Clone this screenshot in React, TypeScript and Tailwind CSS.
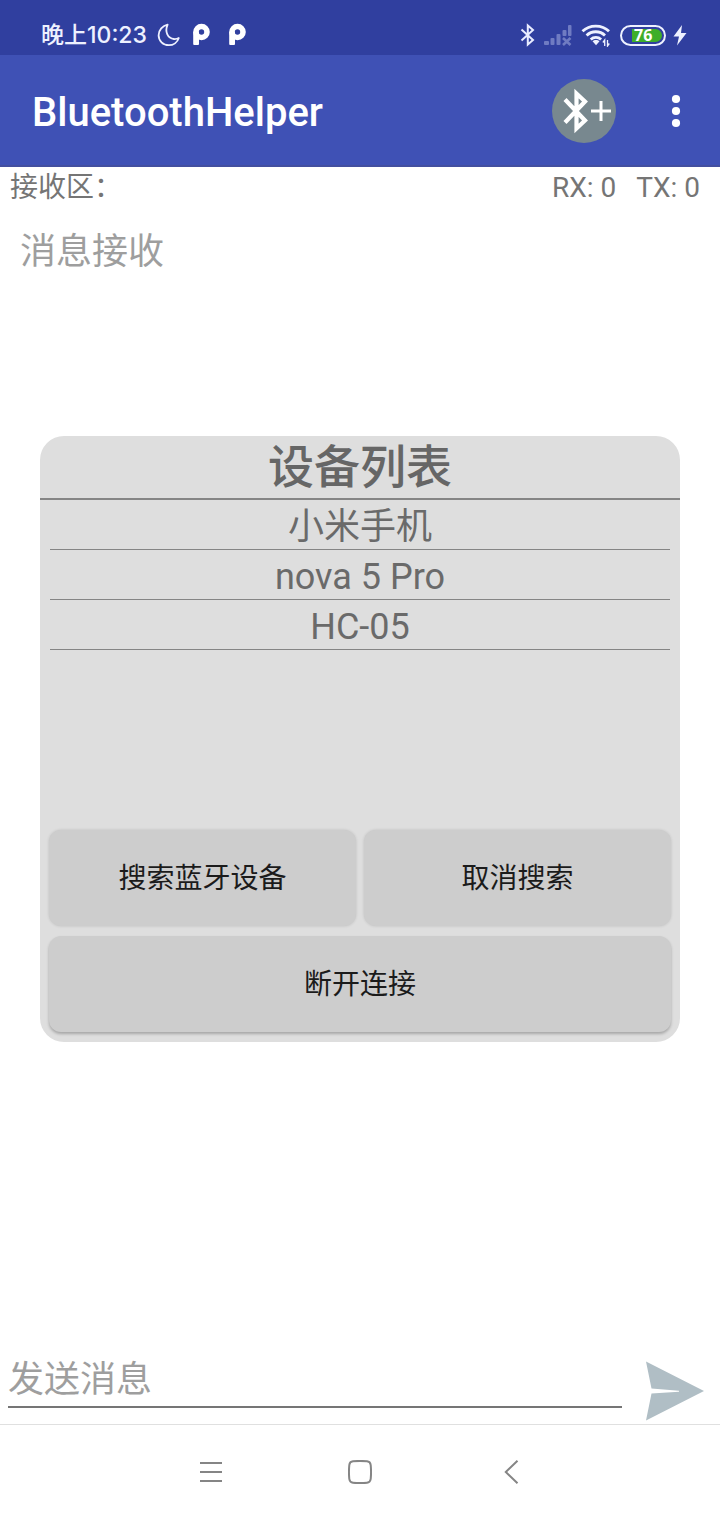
import React from "react";

const devices = ["小米手机", "nova 5 Pro", "HC-05"];

function MoonIcon() {
  return (
    <svg className="size-6" viewBox="0 0 24 24" fill="none" stroke="#eef1ff" strokeWidth="1.8" strokeLinejoin="round" aria-hidden="true">
      <path d="M10.600 1.600C5.600 2.600 1.600 7 1.600 12.200c0 5.600 4.500 10 10.200 10 4.600 0 8.600-3 10-7.200-1.700.900-3.300 1.200-5 1C11 15.500 7.400 9.200 10.600 1.600z" />
    </svg>
  );
}

function NotificationLogo() {
  return (
    <svg className="h-6 w-5" viewBox="0 0 20 24" aria-hidden="true">
      <circle cx="10.500" cy="9" r="5.500" fill="none" stroke="#ffffff" strokeWidth="5.600" />
      <rect x="2.200" y="8.500" width="5.800" height="13.500" rx="1" fill="#ffffff" />
    </svg>
  );
}

function BluetoothIcon() {
  return (
    <svg className="h-6 w-4" viewBox="0 0 16 24" fill="none" stroke="#e8ecff" strokeWidth="2" strokeLinejoin="miter" aria-hidden="true">
      <path d="M1.500 6.500L13 17 7.800 21.500V2.500L13 7 1.500 17.500" />
    </svg>
  );
}

function SignalIcon() {
  return (
    <svg className="h-6 w-7" viewBox="0 0 28 24" aria-hidden="true">
      <g fill="#6f7bc2">
        <rect x="0" y="18" width="5" height="4" rx="1" />
        <rect x="6.500" y="15" width="4" height="7" rx="1" />
        <rect x="12.500" y="11" width="4" height="11" rx="1" />
        <rect x="18.500" y="7" width="4" height="6" rx="1" />
        <rect x="24" y="2" width="3.500" height="11" rx="1" />
      </g>
      <path d="M19 15l7.500 7M26.500 15l-7.500 7" stroke="#6f7bc2" strokeWidth="2.600" />
    </svg>
  );
}

function WifiIcon() {
  return (
    <svg className="h-6 w-8" viewBox="0 0 32 24" fill="none" stroke="#eef1ff" aria-hidden="true">
      <path d="M2.500 8.300C9.500 1.300 22 1.300 29 8.300" strokeWidth="2.800" />
      <path d="M6.600 12.500c5-5 13.400-5 18.400 0" strokeWidth="2.800" />
      <path d="M10.700 16.400c3-2.800 7.400-2.800 10.400 0" strokeWidth="2.800" />
      <path d="M12.500 18.300c1.800-1.800 5.200-1.800 7 0L16 22.300z" fill="#eef1ff" stroke="none" />
      <path d="M24.700 23v-6l-1.800 2.500M27.500 17v6l1.800-2.500" strokeWidth="1.300" />
    </svg>
  );
}

function StatusBar() {
  return (
    <div className="flex h-[55px] items-end justify-between bg-[#303f9f] pr-8 pb-2 pl-[41px]">
      <div className="flex items-center">
        <span className="font-[Inter,'Noto_Sans_CJK_SC',sans-serif] text-[23px] leading-6 font-medium text-[#eef1ff]">晚上10:23</span>
        <span className="ml-2.5"><MoonIcon /></span>
        <span className="ml-2.5"><NotificationLogo /></span>
        <span className="ml-4"><NotificationLogo /></span>
      </div>
      <div className="flex items-center">
        <BluetoothIcon />
        <span className="ml-2"><SignalIcon /></span>
        <span className="ml-2"><WifiIcon /></span>
        <div className="ml-2 flex h-[21px] w-[46px] items-center rounded-full border-2 border-[#eef1ff] p-0.5">
          <div className="ml-2 flex h-[13px] flex-1 items-center justify-start rounded-r-full bg-[#3fae29] pl-0.5 font-['Open_Sans',sans-serif] text-[16px] leading-4 font-bold text-white">
            76
          </div>
        </div>
        <svg className="ml-1.5 h-6 w-4" viewBox="0 0 16 24" fill="#eef1ff" aria-hidden="true">
          <path d="M10 2L1.500 13.500h5.500L5 22.500 14.500 10H9z" />
        </svg>
      </div>
    </div>
  );
}

function AppBar() {
  return (
    <header className="flex h-28 items-center justify-between border-b-2 border-[#434f9f] bg-[#3f51b5] pt-0.5 pr-5 pl-8">
      <h1 className="pt-1 text-[40px] leading-12 font-medium text-white">BluetoothHelper</h1>
      <div className="flex items-center gap-9">
        <button type="button" aria-label="添加蓝牙设备" className="size-16 rounded-full">
          <svg className="size-16" viewBox="0 0 64 64" fill="none" stroke="#ffffff" aria-hidden="true">
            <circle cx="32" cy="32" r="32" fill="#78888f" stroke="none" />
            <path d="M13 20.500L33 41.500 24.500 49.500V14.500L33 22.500 13 43.500" strokeWidth="4.200" />
            <path d="M39 32h20M49 22v20" strokeWidth="3" />
          </svg>
        </button>
        <button type="button" aria-label="更多选项" className="flex h-16 w-12 items-center justify-center">
          <svg className="h-9 w-3" viewBox="0 0 12 36" fill="#ffffff" aria-hidden="true">
            <circle cx="6" cy="6" r="4.100" />
            <circle cx="6" cy="18" r="4.100" />
            <circle cx="6" cy="30" r="4.100" />
          </svg>
        </button>
      </div>
    </header>
  );
}

function DeviceDialog() {
  const button =
    "h-24 rounded-xl bg-[#cdcdcd] pt-0.5 text-[28px] leading-10 text-[#1b1b1b]";
  return (
    <div className="pointer-events-none absolute inset-0 flex items-center justify-center px-10 pb-px">
      <section role="dialog" aria-labelledby="devices" className="pointer-events-auto w-full rounded-3xl bg-[#dedede] pb-2.5">
        <h2 id="devices" className="border-b-2 border-[#858585] text-center text-[46px] leading-[62px] font-medium text-[#666666]">
          设备列表
        </h2>
        <ul className="min-h-80 px-2.5">
          {devices.map((name) => (
            <li key={name} className="border-b border-[#858585]">
              <button type="button" className="block h-[49px] w-full pt-1 text-center text-[36px] leading-[46px] text-[#6a6a6a]">
                {name}
              </button>
            </li>
          ))}
        </ul>
        <div className="grid grid-cols-2 gap-x-2 gap-y-2.5 px-[9px] pt-2.5">
          <button type="button" className={`${button} shadow-[0_0_3px_#00000026]`}>搜索蓝牙设备</button>
          <button type="button" className={`${button} shadow-[0_0_3px_#00000026]`}>取消搜索</button>
          <button type="button" className={`${button} col-span-2 shadow-[0_2px_3px_#00000040]`}>断开连接</button>
        </div>
      </section>
    </div>
  );
}

export default function App() {
  return (
    <div className="flex min-h-screen flex-col bg-white font-[Roboto,'Noto_Sans_CJK_SC',sans-serif]">
      <StatusBar />
      <div className="relative flex flex-1 flex-col">
        <AppBar />
        <main className="flex flex-1 flex-col">
          <div className="flex h-[42px] items-center justify-between pr-5 pl-2.5 text-[28px] leading-10 text-[#757575]">
            <label htmlFor="received">接收区：</label>
            <div className="flex gap-5">
              <span>RX: 0</span>
              <span>TX: 0</span>
            </div>
          </div>
          <textarea
            id="received"
            readOnly
            placeholder="消息接收"
            className="w-full flex-1 resize-none px-5 pt-4 text-[36px] leading-[54px] text-[#757575] outline-none placeholder:text-[#9e9e9e]"
          />
          <form className="flex items-end justify-between pr-4 pl-2" onSubmit={(e) => e.preventDefault()}>
            <input
              type="text"
              aria-label="发送消息"
              placeholder="发送消息"
              className="mb-4 h-14 min-w-0 flex-1 border-b-2 border-[#757575] pt-0.5 text-[36px] leading-[52px] text-[#333333] outline-none placeholder:text-[#9e9e9e]"
            />
            <button type="submit" aria-label="发送" className="mb-0.5 ml-5">
              <svg className="size-[62px]" viewBox="0 0 62 62" fill="#b0bec5" aria-hidden="true">
                <path d="M4 1.500L62 31 4 60.500 9.500 33.500 37 31.700V30.800L9.500 28.500z" />
              </svg>
            </button>
          </form>
        </main>
        <DeviceDialog />
      </div>
      <nav className="flex h-24 items-center justify-center gap-[126px] border-t border-[#e0e0e0] bg-white pb-0.5">
        <button type="button" aria-label="菜单">
          <svg className="size-6" viewBox="0 0 24 24" stroke="#858585" strokeWidth="2" aria-hidden="true">
            <path d="M2 3h22M2 12h22M2 21h22" />
          </svg>
        </button>
        <button type="button" aria-label="主页">
          <svg className="size-6" viewBox="0 0 24 24" fill="none" stroke="#858585" strokeWidth="2" aria-hidden="true">
            <path d="M5 1.300Q12 .6 19 1.300Q22.300 1.600 22.700 5Q23.400 12 22.700 19Q22.300 22.400 19 22.700Q12 23.400 5 22.700Q1.700 22.400 1.300 19Q.6 12 1.300 5Q1.700 1.600 5 1.300z" />
          </svg>
        </button>
        <button type="button" aria-label="返回">
          <svg className="size-6" viewBox="0 0 24 24" fill="none" stroke="#858585" strokeWidth="2" aria-hidden="true">
            <path d="M19.500 .8L7.800 12l11.700 11.200" />
          </svg>
        </button>
      </nav>
    </div>
  );
}
